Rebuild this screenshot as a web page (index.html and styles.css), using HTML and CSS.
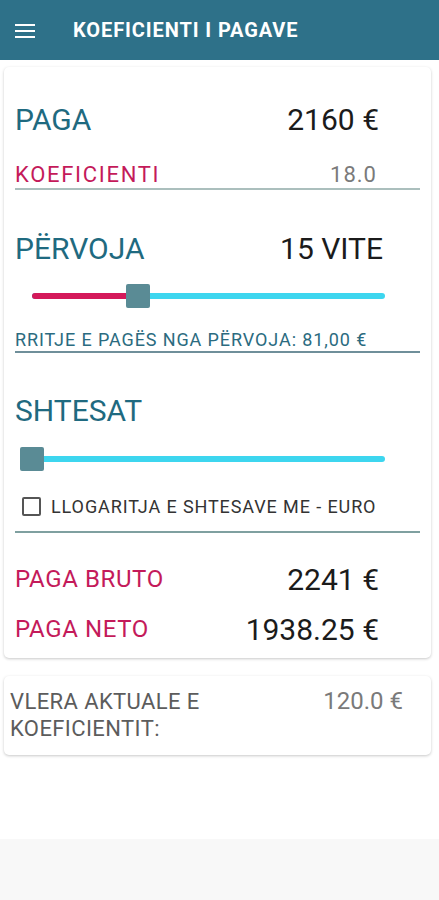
FILE: index.html
```html
<!DOCTYPE html>
<html lang="sq">

<head>
  <meta charset="UTF-8">
  <title>Koeficienti i pagave</title>
  <link rel="stylesheet" href="styles.css">
</head>

<body>

  <header class="topbar">
    <svg class="menu-icon" width="20" height="14" viewBox="0 0 20 14">
      <rect x="0" y="0" width="20" height="2" fill="#fff" />
      <rect x="0" y="6" width="20" height="2" fill="#fff" />
      <rect x="0" y="12" width="20" height="2" fill="#fff" />
    </svg>
    <span class="topbar__title">KOEFICIENTI I PAGAVE</span>
  </header>

  <main class="content">

    <section class="card calc">

      <div class="row row--big">
        <span class="head">PAGA</span>
        <span class="value">2160 €</span>
      </div>

      <div class="row row--field">
        <span class="label-red label-koef">KOEFICIENTI</span>
        <span class="value value--grey">18.0</span>
      </div>

      <div class="row row--big row--pervoja">
        <span class="head">PËRVOJA</span>
        <span class="value value--vite">15 VITE</span>
      </div>

      <div class="slider slider--first">
        <div class="slider__track"></div>
        <div class="slider__fill" style="width: 30%"></div>
        <div class="slider__thumb" style="left: 30%"></div>
      </div>

      <div class="info">RRITJE E PAGËS NGA PËRVOJA: 81,00 €</div>

      <div class="row row--big row--shtesat">
        <span class="head">SHTESAT</span>
      </div>

      <div class="slider slider--second">
        <div class="slider__track"></div>
        <div class="slider__fill" style="width: 0%"></div>
        <div class="slider__thumb" style="left: 0%"></div>
      </div>

      <label class="check">
        <span class="check__box"></span>
        <span class="check__text">LLOGARITJA E SHTESAVE ME - EURO</span>
      </label>

      <div class="divider"></div>

      <div class="row row--total row--bruto">
        <span class="label-red">PAGA BRUTO</span>
        <span class="value">2241 €</span>
      </div>

      <div class="row row--total row--neto">
        <span class="label-red">PAGA NETO</span>
        <span class="value">1938.25 €</span>
      </div>

    </section>

    <section class="card rate">
      <span class="rate__label">VLERA AKTUALE E<br>KOEFICIENTIT:</span>
      <span class="rate__value">120.0 €</span>
    </section>

  </main>

  <footer class="bottom-band"></footer>

</body>

</html>
```

FILE: styles.css
```css
body {
  margin: 0;
  font-family: Roboto, "Noto Sans", sans-serif;
  background-color: #fff;
  min-height: 900px;
  display: flex;
  flex-direction: column;
}

.topbar {
  height: 60px;
  background-color: #2e7189;
  display: flex;
  align-items: center;
  padding-left: 15px;
}

.menu-icon {
  margin-top: 2px;
}

.topbar__title {
  margin-left: 38px;
  color: #fff;
  font-size: 20px;
  font-weight: 700;
  letter-spacing: 0.9px;
  line-height: 24px;
}

.content {
  flex: 1;
  padding: 7px 8px 0 4px;
}

.card {
  background-color: #fff;
  border-radius: 5px;
  box-shadow: 0 1px 3px rgba(0, 0, 0, 0.22);
}

/* main calculator card */
.calc {
  padding: 32px 11px 11px 11px;
}

.row {
  display: flex;
  align-items: center;
  justify-content: space-between;
}

.row--big {
  height: 40px;
}

.head {
  font-size: 30px;
  color: #1f6a80;
}

.value {
  font-size: 30px;
  color: #1b1b1b;
  margin-right: 41px;
}

.value--vite {
  margin-right: 37px;
}

.value--grey {
  font-size: 22px;
  color: #7a7a7a;
  letter-spacing: 1px;
  margin-right: 43px;
}

.label-red {
  color: #c41a5a;
  font-size: 24px;
  letter-spacing: 0.6px;
}

.label-koef {
  font-size: 22px;
  letter-spacing: 1.7px;
}

.row--field {
  margin-top: 21px;
  height: 28px;
  border-bottom: 2px solid #abbfbd;
}

.row--pervoja {
  margin-top: 38px;
}

.slider {
  position: relative;
  height: 24px;
  margin-left: 17px;
  width: 353px;
}

.slider--first {
  margin-top: 16px;
}

.slider--second {
  margin-top: 17px;
}

.slider__track,
.slider__fill {
  position: absolute;
  left: 0;
  top: 9px;
  height: 6px;
  border-radius: 3px;
}

.slider__track {
  width: 100%;
  background-color: #3dd6ef;
}

.slider__fill {
  background-color: #d4195a;
}

.slider__thumb {
  position: absolute;
  top: 0;
  width: 24px;
  height: 24px;
  margin-left: -12px;
  border-radius: 2px;
  background-color: #5a8b95;
}

.info {
  margin-top: 21px;
  height: 22px;
  line-height: 22px;
  font-size: 18px;
  letter-spacing: 0.9px;
  color: #2b6b80;
  border-bottom: 2px solid #6f8f9a;
}

.row--shtesat {
  margin-top: 37px;
}

.check {
  margin-top: 24px;
  height: 22px;
  display: flex;
  align-items: center;
  padding-left: 7px;
}

.check__box {
  width: 15px;
  height: 15px;
  border: 2px solid #555;
  border-radius: 2px;
}

.check__text {
  margin-left: 10px;
  font-size: 18px;
  letter-spacing: 0.9px;
  color: #333;
}

.divider {
  margin-top: 14px;
  height: 2px;
  background-color: #7fa0a0;
}

.row--total {
  height: 36px;
}

.row--bruto {
  margin-top: 28px;
}

.row--neto {
  margin-top: 14px;
}

/* current coefficient value */
.rate {
  margin-top: 18px;
  padding: 12px 28px 13px 6px;
  display: flex;
  justify-content: space-between;
  align-items: flex-start;
}

.rate__label {
  font-size: 22px;
  line-height: 27px;
  letter-spacing: 0.4px;
  color: #5c5c5c;
}

.rate__value {
  font-size: 24px;
  line-height: 27px;
  color: #7a7a7a;
}

.bottom-band {
  height: 61px;
  background-color: #f8f8f8;
}
```
